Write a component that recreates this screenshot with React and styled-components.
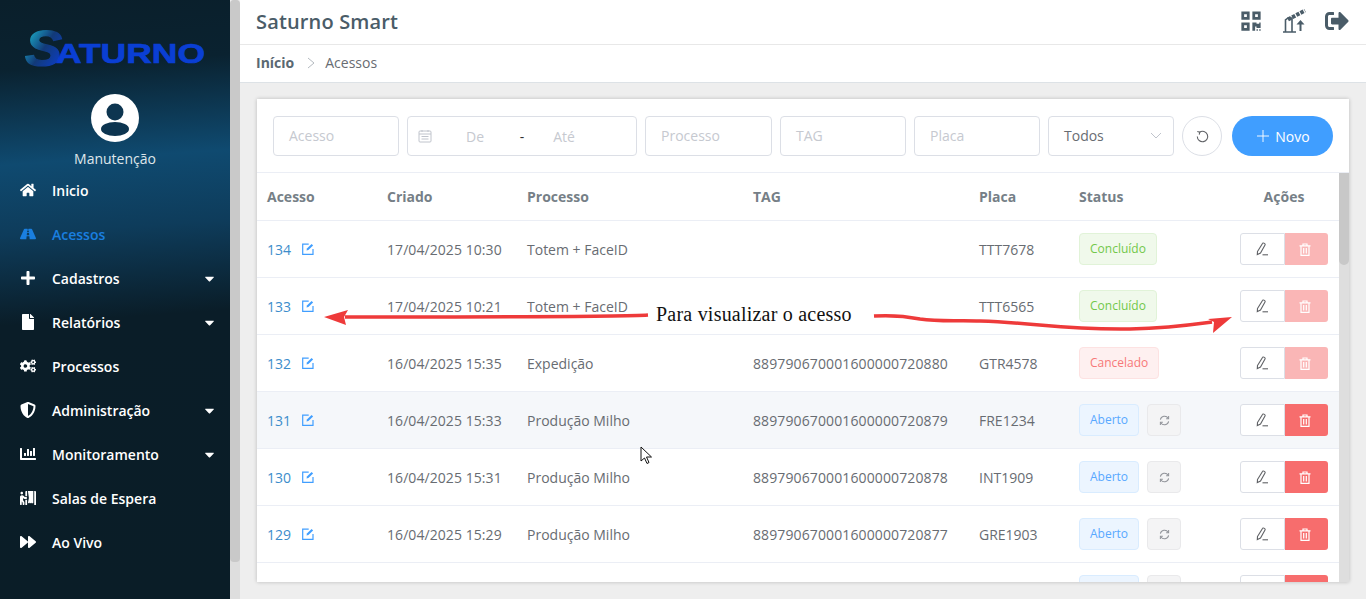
import React from 'react'
import styled, { createGlobalStyle } from 'styled-components'
import {
	FaHome, FaRoad, FaPlus, FaFile, FaCogs, FaShieldAlt, FaChartBar, FaPersonBooth, FaForward, FaCaretDown, FaQrcode, FaSignOutAlt,
} from 'react-icons/fa'

const GlobalStyle = createGlobalStyle`
	html, body { margin: 0; padding: 0; height: 100%; overflow: hidden; }
	body { font-family: "Open Sans", "Liberation Sans", sans-serif; font-size: 14px; color: #686c72; }
	* { box-sizing: border-box; }
`

const Page = styled.div`
	position: relative;
	display: flex;
	height: 100vh;
	width: 100%;
	overflow: hidden;
	background: #eeeeee;
`

const Sidebar = styled.aside`
	width: 230px;
	flex: none;
	display: flex;
	flex-direction: column;
	background: linear-gradient(176deg, #0a1f2b 0, #0a2230 70px, #0f4a70 165px, #0e3c5b 235px, #0a1d28 325px, #0a1d27 100%);
`

const Logo = styled.svg`
	display: block;
	margin: 28px 0 0 24px;
	width: 184px;
	height: 44px;
	flex: none;
	overflow: visible;
`

const Avatar = styled.svg`
	display: block;
	margin: 22px auto 0;
	width: 48px;
	height: 48px;
	flex: none;
`

const UserName = styled.div`
	margin-top: 6px;
	height: 20px;
	line-height: 22px;
	text-align: center;
	color: #dfe6ea;
`

const Menu = styled.nav`
	display: flex;
	flex-direction: column;
`

const MenuItem = styled.div`
	display: flex;
	align-items: center;
	height: 44px;
	padding: 0 13px 0 20px;
	color: ${p => (p.$active ? '#1a7fe0' : '#ffffff')};
	font-weight: 600;
`

const MenuIcon = styled.span`
	width: 32px;
	flex: none;
	display: flex;
	align-items: center;
	font-size: 16px;
`

const MenuLabel = styled.span`
	flex: 1;
`

const Caret = styled(FaCaretDown)`
	font-size: 15px;
	color: #fff;
`

const PageScroll = styled.div`
	width: 10px;
	flex: none;
	display: flex;
	flex-direction: column;
	background: #dedede;
	border-radius: 4px 4px 0 0;
`

const PageThumb = styled.div`
	height: 562px;
	background: #c9c9c9;
	border-radius: 4px;
`

const Main = styled.main`
	flex: 1;
	min-width: 0;
	display: flex;
	flex-direction: column;
`

const TopBar = styled.header`
	height: 45px;
	flex: none;
	display: flex;
	align-items: center;
	justify-content: space-between;
	padding: 0 17px 2px 16px;
	background: #fff;
	border-bottom: 1px solid #e8e8e8;
`

const Title = styled.h1`
	margin: 0;
	font-size: 20px;
	font-weight: 600;
	letter-spacing: 0.15px;
	color: #4a5c68;
`

const TopIcons = styled.div`
	display: flex;
	align-items: center;
	color: #4a5c68;
`

const QrIcon = styled(FaQrcode)`
	width: 22px;
	height: 22px;
	margin-right: 21px;
`

const LogoutIcon = styled(FaSignOutAlt)`
	width: 24px;
	height: 24px;
	margin-left: 18px;
`

const Crumbs = styled.div`
	height: 38px;
	flex: none;
	display: flex;
	align-items: center;
	padding: 0 16px 2px;
	background: #fff;
	border-bottom: 1px solid #dde2e6;
`

const CrumbRoot = styled.span`
	font-weight: 700;
	color: #5a6872;
`

const CrumbSep = styled.svg`
	margin: 0 10px 0 13px;
	width: 8px;
	height: 12px;
`

const Card = styled.section`
	margin: 16px 17px 0;
	height: 483px;
	flex: none;
	display: flex;
	flex-direction: column;
	background: #fff;
	box-shadow: 0 0 4px rgba(0, 0, 0, 0.22);
	overflow: hidden;
`

const Filters = styled.div`
	display: flex;
	gap: 8px;
	padding: 17px 16px 16px;
	border-bottom: 1px solid #ebeef5;
	flex: none;
`

const Field = styled.div`
	width: ${p => p.$w}px;
	height: 40px;
	flex: none;
	display: flex;
	align-items: center;
	padding: 0 15px 1px;
	border: 1px solid #dcdfe6;
	border-radius: 4px;
	color: #c6c9d0;
`

const DateField = styled(Field)`
	padding: 0 10px;
`

const DateText = styled.span`
	width: ${p => p.$w}px;
	text-align: center;
	color: ${p => (p.$dark ? '#303133' : '#c6c9d0')};
`

const SelectField = styled(Field)`
	justify-content: space-between;
	color: #686c72;
	padding-right: 11px;
`

const RoundButton = styled.div`
	width: 40px;
	height: 40px;
	flex: none;
	display: flex;
	align-items: center;
	justify-content: center;
	border: 1px solid #dcdfe6;
	border-radius: 50%;
	color: #606266;
`

const NewButton = styled.div`
	width: 101px;
	height: 40px;
	flex: none;
	margin-left: 2px;
	padding-left: 2px;
	display: flex;
	align-items: center;
	justify-content: center;
	gap: 6px;
	border-radius: 20px;
	background: #409eff;
	color: #fff;
`

const TableArea = styled.div`
	flex: 1;
	min-height: 0;
	display: flex;
`

const Table = styled.div`
	flex: 1;
	min-width: 0;
	overflow: hidden;
`

const Row = styled.div`
	display: grid;
	grid-template-columns: 120px 140px 226px 226px 100px 160px 1fr;
	align-items: center;
	height: ${p => (p.$head ? 48 : 57)}px;
	border-bottom: 1px solid #ebeef5;
	background: ${p => (p.$hover ? '#f5f7fa' : '#fff')};
`

const Cell = styled.div`
	padding-left: 10px;
	display: flex;
	align-items: center;
	white-space: nowrap;
	min-width: 0;
	letter-spacing: ${p => p.$spread || 0}px;
`

const HeadCell = styled(Cell)`
	font-weight: 700;
	color: #767f87;
	justify-content: ${p => (p.$center ? 'center' : 'flex-start')};
	padding-left: ${p => (p.$center ? 0 : 10)}px;
`

const IdLink = styled.span`
	color: #3c8dcb;
	width: 35px;
`

const ActionCell = styled(Cell)`
	padding-left: 11px;
`

const Tag = styled.span`
	height: 32px;
	min-width: ${p => (p.$blank ? 60 : 0)}px;
	line-height: 30px;
	padding: 0 10px;
	font-size: 12px;
	border-radius: 4px;
	border: 1px solid ${p => p.$c.border};
	background: ${p => p.$c.bg};
	color: ${p => p.$c.text};
`

const RetryButton = styled.span`
	width: 34px;
	height: 32px;
	margin-left: 8px;
	display: flex;
	align-items: center;
	justify-content: center;
	background: #f4f4f5;
	border: 1px solid #e9e9eb;
	border-radius: 4px;
	color: #909399;
`

const EditButton = styled.span`
	width: 45px;
	height: 32px;
	display: flex;
	align-items: center;
	justify-content: center;
	padding-right: 2px;
	background: #fff;
	border: 1px solid #dcdfe6;
	border-radius: 3px 0 0 3px;
	color: #606266;
`

const DeleteButton = styled.span`
	width: 43px;
	height: 32px;
	display: flex;
	align-items: center;
	justify-content: center;
	padding-right: 3px;
	background: ${p => (p.$off ? '#fab6b6' : '#f76d6d')};
	border-radius: 0 3px 3px 0;
	color: #fff;
`

const TableScroll = styled.div`
	width: 10px;
	flex: none;
	background: #dedede;
`

const TableThumb = styled.div`
	height: 92px;
	background: #c8c8c8;
	border-radius: 0 0 5px 5px;
`

const Overlay = styled.svg`
	position: absolute;
	inset: 0;
	width: 100%;
	height: 100%;
	pointer-events: none;
`

const Note = styled.div`
	position: absolute;
	left: 656px;
	top: 302px;
	font-family: "Liberation Serif", serif;
	font-size: 20px;
	line-height: 24px;
	letter-spacing: 0.22px;
	color: #111;
	white-space: nowrap;
`

const tagColors = {
	Concluído: { bg: '#f0f9eb', border: '#e1f3d8', text: '#72c84a' },
	Cancelado: { bg: '#fef0f0', border: '#fde2e2', text: '#f77878' },
	Aberto: { bg: '#ecf5ff', border: '#d9ecff', text: '#58a8ff' },
}

const rows = [
	{ id: 134, at: '17/04/2025 10:30', proc: 'Totem + FaceID', tag: '', plate: 'TTT7678', status: 'Concluído' },
	{ id: 133, at: '17/04/2025 10:21', proc: 'Totem + FaceID', tag: '', plate: 'TTT6565', status: 'Concluído' },
	{ id: 132, at: '16/04/2025 15:35', proc: 'Expedição', tag: '889790670001600000720880', plate: 'GTR4578', status: 'Cancelado' },
	{ id: 131, at: '16/04/2025 15:33', proc: 'Produção Milho', tag: '889790670001600000720879', plate: 'FRE1234', status: 'Aberto', hover: true },
	{ id: 130, at: '16/04/2025 15:31', proc: 'Produção Milho', tag: '889790670001600000720878', plate: 'INT1909', status: 'Aberto' },
	{ id: 129, at: '16/04/2025 15:29', proc: 'Produção Milho', tag: '889790670001600000720877', plate: 'GRE1903', status: 'Aberto' },
]

const menu = [
	{ label: 'Inicio', icon: FaHome },
	{ label: 'Acessos', icon: FaRoad, active: true },
	{ label: 'Cadastros', icon: FaPlus, caret: true },
	{ label: 'Relatórios', icon: FaFile, caret: true },
	{ label: 'Processos', icon: FaCogs },
	{ label: 'Administração', icon: FaShieldAlt, caret: true },
	{ label: 'Monitoramento', icon: FaChartBar, caret: true },
	{ label: 'Salas de Espera', icon: FaPersonBooth },
	{ label: 'Ao Vivo', icon: FaForward },
]

const PencilIcon = () => (
	<svg width="14" height="14" viewBox="0 0 14 14" fill="none" stroke="currentColor" strokeWidth="1.100">
		<path d="M2.500 9.500 7.500 1.500a1 1 0 0 1 1.400-.4l.8.5a1 1 0 0 1 .3 1.400L5.500 11l-3.200 1.500z" />
		<path d="M7.500 12.800H13" />
	</svg>
)

const TrashIcon = () => (
	<svg width="12" height="13" viewBox="0 0 12 13" fill="none" stroke="currentColor" strokeWidth="1.200">
		<path d="M.5 2.800h11M4 2.800V1h4v1.800M2 2.800v9.600h8V2.800M4.700 5v5.500M7.300 5v5.500" />
	</svg>
)

const RefreshIcon = ({ size = 11 }) => (
	<svg width={size} height={size} viewBox="0 0 12 12" fill="none" stroke="currentColor" strokeWidth="1.100">
		<path d="M1.500 5A4.600 4.600 0 0 1 10 3.600M10.500 7A4.600 4.600 0 0 1 2 8.400" />
		<path d="M10.500 1.200v2.800H7.800M1.500 10.800V8h2.700" />
	</svg>
)

const ResetIcon = () => (
	<svg width="13" height="13" viewBox="0 0 13 13" fill="none" stroke="currentColor" strokeWidth="1.100">
		<path d="M3.600 2.200A5.200 5.200 0 1 1 1.300 6.500" />
		<path d="M1.300 1.500l2.500.6-.6 2.500" />
	</svg>
)

const CalendarIcon = () => (
	<svg width="14" height="14" viewBox="0 0 14 14" fill="none" stroke="#c0c4cc" strokeWidth="1">
		<rect x="1" y="2" width="12" height="11" rx="1" />
		<path d="M1 5h12M4 1v2M10 1v2M3.500 7.500h7M3.500 10h7" />
	</svg>
)

const OpenIcon = () => (
	<svg width="12" height="12" viewBox="0 0 12 12" fill="none" stroke="#409eff" strokeWidth="1.200">
		<path d="M11 6v5.300H.7V1.200h6" />
		<path d="M4.500 7.600l.4-2L9.600.9l1.500 1.500-4.700 4.700z" fill="#409eff" stroke="none" />
	</svg>
)

const BarrierIcon = () => (
	<svg width="24" height="24" viewBox="0 0 24 24" fill="none" stroke="currentColor">
		<path d="M0 23H13M2.500 23V11L5 9H9V23" strokeWidth="1.600" />
		<path d="M5 10.500 22 1.500" strokeWidth="4" strokeDasharray="3.500 1.200" />
		<path d="M17.500 22V14" strokeWidth="2" />
		<path d="M13.500 15.500 17.500 11l4 4.500z" fill="currentColor" stroke="none" />
	</svg>
)

const App = () => (
	<Page>
		<GlobalStyle />
		<Sidebar>
			<Logo viewBox="0 0 184 44">
				<defs>
					<linearGradient id="logoS" x1="0" y1="0" x2="1" y2="1">
						<stop offset="0" stopColor="#1fd8e4" />
						<stop offset="0.5" stopColor="#123a78" />
						<stop offset="1" stopColor="#0a3fe0" />
					</linearGradient>
				</defs>
				<text x="1" y="38" fontFamily="Liberation Sans" fontWeight="700" fontStyle="italic" fontSize="50" fill="url(#logoS)" stroke="url(#logoS)" strokeWidth="1.200" textLength="37" lengthAdjust="spacingAndGlyphs">S</text>
				<text x="32" y="35" fontFamily="Liberation Sans" fontWeight="700" fontSize="28" fill="#0a3fd4" stroke="#0a3fd4" strokeWidth="0.700" textLength="149" lengthAdjust="spacingAndGlyphs">ATURNO</text>
			</Logo>
			<Avatar viewBox="0 0 48 48">
				<circle cx="24" cy="24" r="24" fill="#fff" />
				<circle cx="24" cy="18" r="8.500" fill="#0d3550" />
				<ellipse cx="24" cy="35" rx="14" ry="7" fill="#0d3550" />
			</Avatar>
			<UserName>Manutenção</UserName>
			<Menu>
				{menu.map(({ label, icon: Icon, active, caret }) => (
					<MenuItem key={label} $active={active}>
						<MenuIcon><Icon /></MenuIcon>
						<MenuLabel>{label}</MenuLabel>
						{caret && <Caret />}
					</MenuItem>
				))}
			</Menu>
		</Sidebar>
		<PageScroll><PageThumb /></PageScroll>
		<Main>
			<TopBar>
				<Title>Saturno Smart</Title>
				<TopIcons>
					<QrIcon />
					<BarrierIcon />
					<LogoutIcon />
				</TopIcons>
			</TopBar>
			<Crumbs>
				<CrumbRoot>Início</CrumbRoot>
				<CrumbSep viewBox="0 0 8 12" fill="none" stroke="#b4bac0"><path d="M1 1l6 5-6 5" /></CrumbSep>
				<span>Acessos</span>
			</Crumbs>
			<Card>
				<Filters>
					<Field $w={126}>Acesso</Field>
					<DateField $w={230}>
						<CalendarIcon />
						<DateText $w={86}>De</DateText>
						<DateText $w={8} $dark>-</DateText>
						<DateText $w={76}>Até</DateText>
					</DateField>
					<Field $w={127}>Processo</Field>
					<Field $w={126}>TAG</Field>
					<Field $w={126}>Placa</Field>
					<SelectField $w={126}>
						Todos
						<svg width="12" height="8" viewBox="0 0 12 8" fill="none" stroke="#c0c4cc"><path d="M1 1l5 5 5-5" /></svg>
					</SelectField>
					<RoundButton><ResetIcon /></RoundButton>
					<NewButton>
						<svg width="12" height="12" viewBox="0 0 13 13" stroke="#fff"><path d="M6.500 0v13M0 6.500h13" /></svg>
						Novo
					</NewButton>
				</Filters>
				<TableArea>
					<Table>
						<Row $head>
							<HeadCell>Acesso</HeadCell>
							<HeadCell>Criado</HeadCell>
							<HeadCell>Processo</HeadCell>
							<HeadCell>TAG</HeadCell>
							<HeadCell>Placa</HeadCell>
							<HeadCell>Status</HeadCell>
							<HeadCell $center>Ações</HeadCell>
						</Row>
						{rows.map(r => (
							<Row key={r.id} $hover={r.hover}>
								<Cell><IdLink>{r.id}</IdLink><OpenIcon /></Cell>
								<Cell $spread={0.07}>{r.at}</Cell>
								<Cell>{r.proc}</Cell>
								<Cell $spread={0.12}>{r.tag}</Cell>
								<Cell>{r.plate}</Cell>
								<Cell>
									<Tag $c={tagColors[r.status]}>{r.status}</Tag>
									{r.status === 'Aberto' && <RetryButton><RefreshIcon /></RetryButton>}
								</Cell>
								<ActionCell>
									<EditButton><PencilIcon /></EditButton>
									<DeleteButton $off={r.status !== 'Aberto'}><TrashIcon /></DeleteButton>
								</ActionCell>
							</Row>
						))}
						{/* next row is scrolled almost out of the card, only the tops of its boxes show */}
						<Row>
							<Cell />
							<Cell />
							<Cell />
							<Cell />
							<Cell />
							<Cell>
								<Tag $blank $c={tagColors.Aberto} />
								<RetryButton />
							</Cell>
							<ActionCell>
								<EditButton />
								<DeleteButton />
							</ActionCell>
						</Row>
					</Table>
					<TableScroll><TableThumb /></TableScroll>
				</TableArea>
			</Card>
		</Main>
		<Overlay viewBox="0 0 1366 599">
			<path d="M648 315C620 317 520 317 345 317" stroke="#ee3a3a" strokeWidth="3.500" fill="none" />
			<path d="M324 317 348 310 344 317 346 325z" fill="#ee3a3a" />
			<path d="M874 316C890 315 905 316 920 319C940 322 960 320 980 321C1040 323 1060 330 1130 329C1170 328 1190 325 1212 322" stroke="#ee3a3a" strokeWidth="3.500" fill="none" />
			<path d="M1232 317 1213 333 1214 322 1208 319z" fill="#ee3a3a" />
			<path d="M641 447v14l3.500-3 2.500 5.500 2-1-2.500-5.500h5z" fill="#fff" stroke="#111" strokeWidth="1" />
		</Overlay>
		<Note>Para visualizar o acesso</Note>
	</Page>
)

export default App
